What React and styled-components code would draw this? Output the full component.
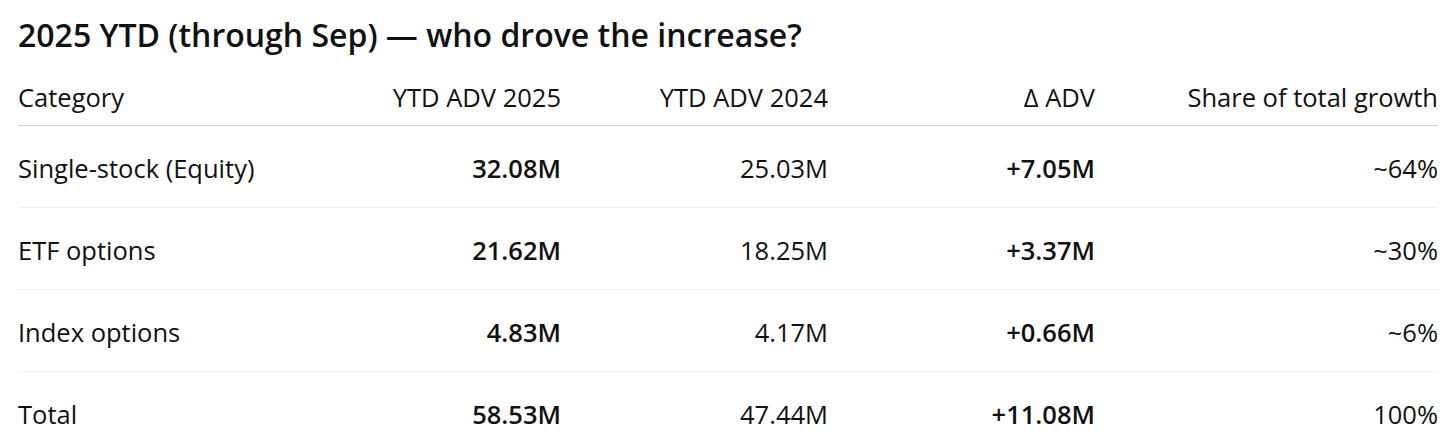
import React from "react";
import styled, { createGlobalStyle } from "styled-components";

const GlobalStyle = createGlobalStyle`
  body {
    margin: 0;
    background: #ffffff;
    font-family: "Open Sans", "Noto Sans", "Liberation Sans", sans-serif;
    color: #111111;
  }
`;

const Page = styled.div`
  padding: 0 18px;
`;

const Title = styled.h2`
  margin: 0;
  height: 69px;
  display: flex;
  align-items: center;
  font-size: 32px;
  font-weight: 600;
`;

const Table = styled.div`
  display: grid;
  grid-template-columns: 276px 267px 267px 267px 343px;
`;

const Cell = styled.div`
  box-sizing: border-box;
  display: flex;
  align-items: center;
  justify-content: ${(p) => (p.$left ? "flex-start" : "flex-end")};
  height: ${(p) => (p.$head ? "57px" : "82px")};
  padding-top: ${(p) => (p.$head ? "0" : "3px")};
  font-size: 25.5px;
  font-weight: ${(p) => (p.$bold ? 600 : 400)};
  border-bottom: 1px solid ${(p) => (p.$head ? "#d4d4d4" : "#f0f0f0")};
  white-space: nowrap;
`;

const columns = ["Category", "YTD ADV 2025", "YTD ADV 2024", "Δ ADV", "Share of total growth"];

const rows = [
  ["Single-stock (Equity)", "32.08M", "25.03M", "+7.05M", "~64%"],
  ["ETF options", "21.62M", "18.25M", "+3.37M", "~30%"],
  ["Index options", "4.83M", "4.17M", "+0.66M", "~6%"],
  ["Total", "58.53M", "47.44M", "+11.08M", "100%"],
];

// columns 1 and 3 are set in semibold
const boldCols = [1, 3];

export default function App() {
  return (
    <Page>
      <GlobalStyle />
      <Title>2025 YTD (through Sep) — who drove the increase?</Title>
      <Table>
        {columns.map((c, i) => (
          <Cell key={c} $head $left={i === 0}>
            {c}
          </Cell>
        ))}
        {rows.map((r) =>
          r.map((v, i) => (
            <Cell key={r[0] + i} $left={i === 0} $bold={boldCols.includes(i)}>
              {v}
            </Cell>
          ))
        )}
      </Table>
    </Page>
  );
}
